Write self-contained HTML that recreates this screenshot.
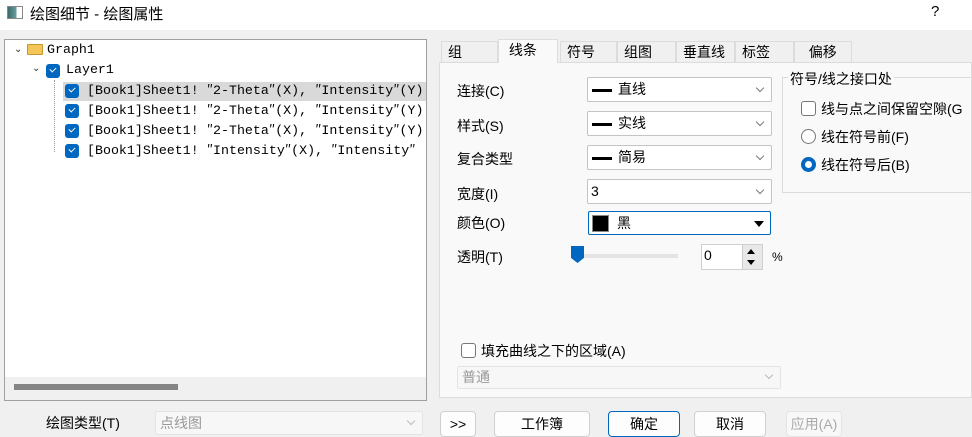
<!DOCTYPE html>
<html><head><meta charset="utf-8"><style>
*{box-sizing:border-box;margin:0;padding:0}
body{width:972px;height:437px;background:#f0f0f0;position:relative;overflow:hidden;font-family:"Liberation Sans","Noto Sans CJK SC",sans-serif;font-size:13px;color:#000}
.a{position:absolute;white-space:nowrap}
.mono{font-family:"Liberation Mono","Noto Sans CJK SC",monospace;font-size:13.3px;line-height:18px}
.q{font-family:"Noto Sans CJK SC",sans-serif;line-height:1}
.cb{position:absolute;width:14px;height:14px;background:#0067c0;border-radius:3px}
.cb:after{content:"";position:absolute;left:4px;top:3px;width:5px;height:3px;border-left:1.3px solid #fff;border-bottom:1.3px solid #fff;transform:rotate(-45deg)}
.sel{position:absolute;background:#fff;border:1px solid #c4c4c4;border-radius:2px;height:25px}
.chev{position:absolute;right:8px;top:7px;width:6px;height:6px;border-right:1px solid #777;border-bottom:1px solid #777;transform:rotate(45deg)}
.btn{position:absolute;background:#fdfdfd;border:1px solid #d0d0d0;border-radius:4px;height:26px;text-align:center;line-height:24px;font-size:14px}
.tab{position:absolute;top:41px;height:21px;border:1px solid #dcdcdc;border-bottom:none;background:#f0f0f0;font-size:14px;padding-left:6px;line-height:20px}
.lbl{position:absolute;left:457px;font-size:14px}
.line{display:inline-block;width:20px;height:3px;background:#000;vertical-align:middle;margin:0 6px 0 4px}
</style></head><body>
<div class="a" style="left:0;top:0;width:972px;height:30px;background:#fff"></div>
<div class="a" style="left:7px;top:6px;width:16px;height:13px;border:1px solid #888;background:linear-gradient(90deg,#3a6b6b,#6aa0a0 60%,#fff 60%)"></div>
<div class="a" style="left:30px;top:3px;font-size:15px">绘图细节 - 绘图属性</div>
<div class="a" style="left:931px;top:3px;font-size:15px">?</div>

<!-- tree -->
<div class="a" style="left:4px;top:39px;width:423px;height:362px;background:#fff;border:1px solid #a0a0a0"></div>
<div class="a" style="left:5px;top:377px;width:421px;height:23px;background:#f0f0f0"></div>
<div class="a" style="left:14px;top:384px;width:164px;height:6px;background:#858585"></div>
<div class="a" style="left:14px;top:44px;font-size:10px;color:#333">&#8964;</div>
<div class="a" style="left:27px;top:44px;width:16px;height:11px;background:#f3c65a;border:1px solid #c8962a;border-radius:1px"></div>
<div class="a mono" style="left:47px;top:41px">Graph1</div>
<div class="a" style="left:32px;top:63px;font-size:10px;color:#333">&#8964;</div>
<div class="cb" style="left:46px;top:64px"></div>
<div class="a mono" style="left:66px;top:61px">Layer1</div>
<div class="a" style="left:54px;top:80px;width:1px;height:72px;border-left:1px dotted #999"></div>
<div class="a" style="left:5px;top:80px;width:421px;height:82px;overflow:hidden">
<div class="a" style="left:58px;top:2px;width:363px;height:19px;background:#d9d9d9"></div>
<div class="cb" style="left:60px;top:4px"></div><div class="a mono" style="left:82px;top:2px">[Book1]Sheet1! <span class="q">″</span>2-Theta<span class="q">″</span>(X), <span class="q">″</span>Intensity<span class="q">″</span>(Y)</div>
<div class="cb" style="left:60px;top:24px"></div><div class="a mono" style="left:82px;top:22px">[Book1]Sheet1! <span class="q">″</span>2-Theta<span class="q">″</span>(X), <span class="q">″</span>Intensity<span class="q">″</span>(Y)</div>
<div class="cb" style="left:60px;top:44px"></div><div class="a mono" style="left:82px;top:42px">[Book1]Sheet1! <span class="q">″</span>2-Theta<span class="q">″</span>(X), <span class="q">″</span>Intensity<span class="q">″</span>(Y)</div>
<div class="cb" style="left:60px;top:64px"></div><div class="a mono" style="left:82px;top:62px">[Book1]Sheet1! <span class="q">″</span>Intensity<span class="q">″</span>(X), <span class="q">″</span>Intensity<span class="q">″</span></div>
</div>

<!-- tab panel -->
<div class="a" style="left:439px;top:62px;width:533px;height:336px;background:#f9f9f9;border:1px solid #dcdcdc"></div>
<div class="tab" style="left:441px;width:57px">组</div>
<div class="tab" style="left:498px;width:60px;top:39px;height:24px;background:#f9f9f9">&nbsp;线条</div>
<div class="tab" style="left:560px;width:57px">符号</div>
<div class="tab" style="left:617px;width:59px">组图</div>
<div class="tab" style="left:676px;width:59px">垂直线</div>
<div class="tab" style="left:735px;width:59px">标签</div>
<div class="tab" style="left:794px;width:58px">&nbsp;&nbsp;偏移</div>

<div class="lbl" style="top:81px">连接(C)</div>
<div class="lbl" style="top:116px">样式(S)</div>
<div class="lbl" style="top:149px">复合类型</div>
<div class="lbl" style="top:184px">宽度(I)</div>
<div class="lbl" style="top:213px">颜色(O)</div>
<div class="lbl" style="top:247px">透明(T)</div>
<div class="sel" style="left:587px;top:77px;width:185px;font-size:14px;line-height:23px"><span class="line"></span>直线<div class="chev"></div></div>
<div class="sel" style="left:587px;top:111px;width:185px;font-size:14px;line-height:23px"><span class="line"></span>实线<div class="chev"></div></div>
<div class="sel" style="left:587px;top:145px;width:185px;font-size:14px;line-height:23px"><span class="line"></span>简易<div class="chev"></div></div>
<div class="sel" style="left:587px;top:179px;width:185px;font-size:14px;line-height:23px;padding-left:3px">3<div class="chev"></div></div>
<div class="sel" style="left:588px;top:211px;width:183px;height:24px;border:1px solid #0067c0;font-size:14px;line-height:22px">
<div class="a" style="left:3px;top:3px;width:17px;height:17px;background:#000;border:1px solid #888"></div><span style="position:absolute;left:28px">黑</span>
<div class="a" style="right:6px;top:9px;border-left:5px solid transparent;border-right:5px solid transparent;border-top:6px solid #000"></div></div>
<div class="a" style="left:573px;top:254px;width:105px;height:4px;background:#e4e4e4"></div>
<div class="a" style="left:571px;top:246px;width:13px;height:17px;background:#0067c0;clip-path:polygon(0 0,100% 0,100% 70%,50% 100%,0 70%)"></div>
<div class="a" style="left:701px;top:244px;width:62px;height:26px;background:#fff;border:1px solid #d0d0d0"></div>
<div class="a" style="left:704px;top:247px;font-size:14px">0</div>
<div class="a" style="left:742px;top:245px;width:20px;height:24px;background:#e8e8e8;border-left:1px solid #ccc"></div>
<div class="a" style="left:747px;top:249px;border-left:4px solid transparent;border-right:4px solid transparent;border-bottom:5px solid #000"></div>
<div class="a" style="left:747px;top:260px;border-left:4px solid transparent;border-right:4px solid transparent;border-top:5px solid #000"></div>
<div class="a" style="left:772px;top:250px;font-size:12px">%</div>

<div class="a" style="left:782px;top:77px;width:195px;height:116px;border:1px solid #dcdcdc"></div>
<div class="a" style="left:788px;top:69px;font-size:14px;background:#f9f9f9;padding:0 2px">符号/线之接口处</div>
<div class="a" style="left:801px;top:101px;width:15px;height:15px;border:1px solid #777;border-radius:3px;background:#fff"></div>
<div class="a" style="left:821px;top:99px;font-size:14px">线与点之间保留空隙(G</div>
<div class="a" style="left:801px;top:129px;width:15px;height:15px;border:1px solid #777;border-radius:50%;background:#fff"></div>
<div class="a" style="left:821px;top:127px;font-size:14px">线在符号前(F)</div>
<div class="a" style="left:801px;top:157px;width:15px;height:15px;border:4px solid #0067c0;border-radius:50%;background:#fff"></div>
<div class="a" style="left:821px;top:155px;font-size:14px">线在符号后(B)</div>

<div class="a" style="left:461px;top:343px;width:15px;height:15px;border:1px solid #777;border-radius:3px;background:#fff"></div>
<div class="a" style="left:481px;top:341px;font-size:14px">填充曲线之下的区域(A)</div>
<div class="sel" style="left:457px;top:366px;width:324px;height:23px;background:#f7f7f7;border-color:#e4e4e4;color:#999;font-size:14px;line-height:21px;padding-left:4px">普通<div class="chev" style="border-color:#bbb;top:5px"></div></div>

<!-- bottom -->
<div class="a" style="left:46px;top:413px;font-size:14px">绘图类型(T)</div>
<div class="sel" style="left:155px;top:411px;width:268px;height:24px;background:#f7f7f7;border-color:#e4e4e4;color:#999;font-size:14px;line-height:22px;padding-left:4px">点线图<div class="chev" style="border-color:#bbb;top:6px"></div></div>
<div class="btn" style="left:440px;top:411px;width:36px">&gt;&gt;</div>
<div class="btn" style="left:494px;top:411px;width:96px">工作簿</div>
<div class="btn" style="left:608px;top:411px;width:72px;border-color:#0067c0">确定</div>
<div class="btn" style="left:694px;top:411px;width:72px">取消</div>
<div class="btn" style="left:786px;top:411px;width:56px;color:#aaa;background:#f8f8f8;border-color:#e4e4e4">应用(A)</div>
</body></html>
